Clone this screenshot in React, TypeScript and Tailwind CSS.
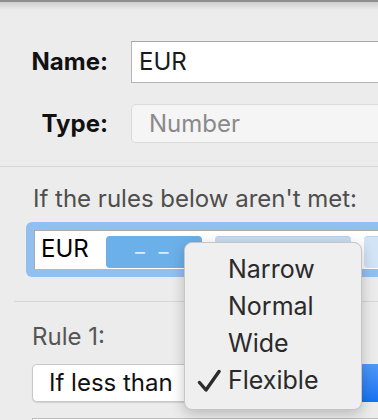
import React from "react";

const menuItems = [
  { label: "Narrow", checked: false },
  { label: "Normal", checked: false },
  { label: "Wide", checked: false },
  { label: "Flexible", checked: true },
];

function Check() {
  return (
    <svg width="24" height="24" viewBox="0 0 24 24" className="absolute left-[12px] top-[7px]">
      <path
        d="M2.5 13.5 L9 21 L22 2.5"
        fill="none"
        stroke="#2b2b2b"
        strokeWidth="3.4"
        strokeLinecap="round"
        strokeLinejoin="round"
      />
    </svg>
  );
}

export default function App() {
  return (
    <div
      className="relative h-[420px] w-[378px] overflow-hidden bg-[#ececec]"
      style={{ fontFamily: "Inter, 'Noto Sans', sans-serif" }}
    >
      {/* Window top edge */}
      <div className="h-[2px] bg-[#8e8e8e]" />
      <div className="h-[8px] bg-gradient-to-b from-[#cdcdcd] to-[#ececec]" />

      {/* Name / Type */}
      <div className="flex flex-col gap-[21px] pt-[31px]">
        <div className="flex items-center">
          <div className="w-[108px] shrink-0 text-right text-[24px] font-bold text-[#111]">Name:</div>
          <div className="ml-[23px] flex h-[42px] w-[270px] shrink-0 items-center border border-[#b4b4b4] border-t-[#a6a6a6] bg-white pl-[7px] text-[24px] text-[#1a1a1a]">
            EUR
          </div>
        </div>
        <div className="flex items-center">
          <div className="w-[108px] shrink-0 text-right text-[24px] font-bold text-[#111]">Type:</div>
          <div className="ml-[23px] flex h-[39px] w-[270px] shrink-0 items-center rounded-[5px] border border-[#dadada] bg-[#f5f5f5] pl-[17px] text-[24px] text-[#8a8a8a]">
            Number
          </div>
        </div>
      </div>

      <div className="mt-[23px] h-px bg-[#d6d6d6]" />

      {/* Fallback format */}
      <div className="mt-[17px] pl-[33px] text-[24px] leading-[30px] text-[#4e4e4e]">
        If the rules below aren't met:
      </div>
      <div className="ml-[26px] mt-[8px] h-[55px] w-[380px] rounded-[6px] bg-[#92bff0] pb-[8px] pl-[8px] pt-[8px]">
        <div className="flex h-full items-end gap-[13px] border-l border-t border-[#a9a9a9] bg-white pb-px pl-[6px]">
          <span className="mb-[2px] mr-[4px] shrink-0 self-center text-[24px] leading-none text-black">EUR</span>
          <div className="flex h-[32px] w-[96px] shrink-0 items-center justify-center rounded-[4px] bg-[#6cb0ea] text-[20px] tracking-[4px] text-[#dcebfa]">
            – –
          </div>
          <div className="h-[32px] w-[136px] shrink-0 rounded-[4px] border-t border-[#b8d0ea] bg-[#c8ddf2]" />
          <div className="h-[32px] w-[60px] shrink-0 rounded-[4px] border-t border-[#bcd3ec] bg-[#d2e4f6]" />
        </div>
      </div>

      <div className="ml-[14px] mt-[24px] h-px bg-[#d6d6d6]" />

      {/* Rule 1 */}
      <div className="mt-[20px] pl-[32px] text-[24px] leading-[30px] text-[#555]">Rule 1:</div>
      <div className="ml-[32px] mt-[12px] flex h-[38px]">
        <div className="flex w-[338px] items-center rounded-l-[5px] border border-r-0 border-[#c9c9c9] bg-white pl-[16px] text-[24px] text-[#111] shadow-[0_1px_1px_rgba(0,0,0,0.12)]">
          If less than
        </div>
        <div className="w-[20px] bg-gradient-to-b from-[#4f98f8] to-[#1472f2]" />
      </div>
      <div className="ml-[32px] mt-[16px] h-[20px] border-l border-t border-[#bdbdbd] bg-white" />

      {/* Width menu */}
      <div className="absolute left-[184px] top-[242px] w-[178px] rounded-[8px] border border-[#c6c6c6] bg-[#efefef] pb-[10px] pt-[8px] shadow-[0_4px_14px_rgba(0,0,0,0.22)]">
        {menuItems.map((item) => (
          <div key={item.label} className="relative h-[37px] pl-[43px] text-[25px] leading-[37px] text-[#2a2a2a]">
            {item.checked && <Check />}
            {item.label}
          </div>
        ))}
      </div>
    </div>
  );
}
